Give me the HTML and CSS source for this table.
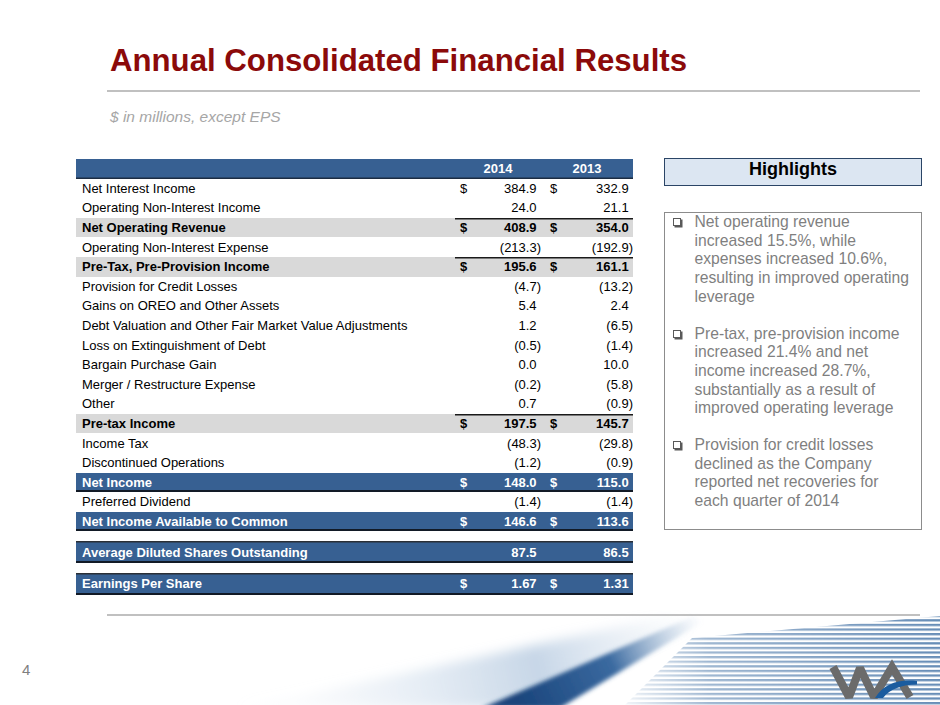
FILE: index.html
```html
<!DOCTYPE html>
<html lang="en">
<head>
<meta charset="utf-8">
<title>Annual Consolidated Financial Results</title>
<link rel="stylesheet" href="styles.css">
</head>
<body>
  <svg class="decor" viewBox="0 0 940 95" width="940" height="95" aria-hidden="true">
    <defs>
      <pattern id="st" width="940" height="4.6" patternUnits="userSpaceOnUse">
        <rect x="0" y="0" width="940" height="2.3" fill="#5f87b3"/>
      </pattern>
      <linearGradient id="fadeX" x1="610" y1="0" x2="940" y2="0" gradientUnits="userSpaceOnUse">
        <stop offset="0" stop-color="#fff" stop-opacity="0"/>
        <stop offset="0.3" stop-color="#fff" stop-opacity="0.6"/>
        <stop offset="1" stop-color="#fff" stop-opacity="0.95"/>
      </linearGradient>
      <mask id="stMask">
        <rect x="0" y="0" width="940" height="95" fill="url(#fadeX)"/>
      </mask>
      <linearGradient id="streak" x1="520" y1="95" x2="700" y2="5" gradientUnits="userSpaceOnUse">
        <stop offset="0" stop-color="#1a457c"/>
        <stop offset="0.5" stop-color="#3b6aa0"/>
        <stop offset="1" stop-color="#a9c1db" stop-opacity="0"/>
      </linearGradient>
      <linearGradient id="haze" x1="300" y1="95" x2="690" y2="5" gradientUnits="userSpaceOnUse">
        <stop offset="0" stop-color="#dbe6f1" stop-opacity="0.15"/>
        <stop offset="0.6" stop-color="#a8c0da" stop-opacity="0.65"/>
        <stop offset="1" stop-color="#c9d8e8" stop-opacity="0"/>
      </linearGradient>
      <filter id="blur6"><feGaussianBlur stdDeviation="6"/></filter>
      <filter id="blur2"><feGaussianBlur stdDeviation="2"/></filter>
    </defs>
    <polygon points="625,95 692,28 940,6 940,95" fill="url(#st)" mask="url(#stMask)"/>
    <polygon points="240,98 500,98 705,12 670,6" fill="url(#haze)" filter="url(#blur6)"/>
    <polygon points="482,98 560,98 706,10 694,6" fill="url(#streak)" filter="url(#blur2)"/>
    <polyline points="833,57 849,87 860,58 874,87 892,57 910,87" fill="none" stroke="#6b6b6b" stroke-width="8" stroke-linejoin="miter" stroke-miterlimit="2"/>
    <path d="M875,88 C884,74 898,69 917,71 L917,74.5 C902,74.5 890,79 883,88 Z" fill="#1b5c9f"/>
  </svg>

  <h1 class="title">Annual Consolidated Financial Results</h1>
  <div class="rule"></div>
  <p class="subtitle">$ in millions, except EPS</p>

  <main class="content">
    <table class="fin">
      <colgroup>
        <col class="c-label"><col class="c-cur"><col class="c-v1"><col class="c-cur2"><col class="c-v2">
      </colgroup>
      <thead>
        <tr class="hdr"><th></th><th colspan="2">2014</th><th colspan="2">2013</th></tr>
      </thead>
      <tbody>
        <tr><td class="lbl">Net Interest Income</td><td class="cur">$</td><td class="num">384.9</td><td class="cur">$</td><td class="num">332.9</td></tr>
        <tr><td class="lbl">Operating Non-Interest Income</td><td class="cur"></td><td class="num">24.0</td><td class="cur"></td><td class="num">21.1</td></tr>
        <tr class="sub"><td class="lbl">Net Operating Revenue</td><td class="cur">$</td><td class="num">408.9</td><td class="cur">$</td><td class="num">354.0</td></tr>
        <tr><td class="lbl">Operating Non-Interest Expense</td><td class="cur"></td><td class="num neg">(213.3)</td><td class="cur"></td><td class="num neg">(192.9)</td></tr>
        <tr class="sub"><td class="lbl">Pre-Tax, Pre-Provision Income</td><td class="cur">$</td><td class="num">195.6</td><td class="cur">$</td><td class="num">161.1</td></tr>
        <tr><td class="lbl">Provision for Credit Losses</td><td class="cur"></td><td class="num neg">(4.7)</td><td class="cur"></td><td class="num neg">(13.2)</td></tr>
        <tr><td class="lbl">Gains on OREO and Other Assets</td><td class="cur"></td><td class="num">5.4</td><td class="cur"></td><td class="num">2.4</td></tr>
        <tr><td class="lbl">Debt Valuation and Other Fair Market Value Adjustments</td><td class="cur"></td><td class="num">1.2</td><td class="cur"></td><td class="num neg">(6.5)</td></tr>
        <tr><td class="lbl">Loss on Extinguishment of Debt</td><td class="cur"></td><td class="num neg">(0.5)</td><td class="cur"></td><td class="num neg">(1.4)</td></tr>
        <tr><td class="lbl">Bargain Purchase Gain</td><td class="cur"></td><td class="num">0.0</td><td class="cur"></td><td class="num">10.0</td></tr>
        <tr><td class="lbl">Merger / Restructure Expense</td><td class="cur"></td><td class="num neg">(0.2)</td><td class="cur"></td><td class="num neg">(5.8)</td></tr>
        <tr><td class="lbl">Other</td><td class="cur"></td><td class="num">0.7</td><td class="cur"></td><td class="num neg">(0.9)</td></tr>
        <tr class="sub"><td class="lbl">Pre-tax Income</td><td class="cur">$</td><td class="num">197.5</td><td class="cur">$</td><td class="num">145.7</td></tr>
        <tr><td class="lbl">Income Tax</td><td class="cur"></td><td class="num neg">(48.3)</td><td class="cur"></td><td class="num neg">(29.8)</td></tr>
        <tr><td class="lbl">Discontinued Operations</td><td class="cur"></td><td class="num neg">(1.2)</td><td class="cur"></td><td class="num neg">(0.9)</td></tr>
        <tr class="tot"><td class="lbl">Net Income</td><td class="cur">$</td><td class="num">148.0</td><td class="cur">$</td><td class="num">115.0</td></tr>
        <tr><td class="lbl">Preferred Dividend</td><td class="cur"></td><td class="num neg">(1.4)</td><td class="cur"></td><td class="num neg">(1.4)</td></tr>
        <tr class="tot"><td class="lbl">Net Income Available to Common</td><td class="cur">$</td><td class="num">146.6</td><td class="cur">$</td><td class="num">113.6</td></tr>
        <tr class="gap"><td colspan="5"></td></tr>
        <tr class="tot boxed"><td class="lbl">Average Diluted Shares Outstanding</td><td class="cur"></td><td class="num">87.5</td><td class="cur"></td><td class="num">86.5</td></tr>
        <tr class="gap gap2"><td colspan="5"></td></tr>
        <tr class="tot boxed"><td class="lbl">Earnings Per Share</td><td class="cur">$</td><td class="num">1.67</td><td class="cur">$</td><td class="num">1.31</td></tr>
      </tbody>
    </table>

    <aside class="side">
      <div class="hl-head">Highlights</div>
      <div class="hl-box">
        <div class="hl-item">
          <span class="bullet"><span class="sq"></span></span>
          <span class="hl-text">Net operating revenue<br>increased 15.5%, while<br>expenses increased 10.6%,<br>resulting in improved operating<br>leverage</span>
        </div>
        <div class="hl-item">
          <span class="bullet"><span class="sq"></span></span>
          <span class="hl-text">Pre-tax, pre-provision income<br>increased 21.4% and net<br>income increased 28.7%,<br>substantially as a result of<br>improved operating leverage</span>
        </div>
        <div class="hl-item">
          <span class="bullet"><span class="sq"></span></span>
          <span class="hl-text">Provision for credit losses<br>declined as the Company<br>reported net recoveries for<br>each quarter of 2014</span>
        </div>
      </div>
    </aside>
  </main>

  <div class="rule rule-bottom"></div>
  <div class="page">4</div>
</body>
</html>
```

FILE: styles.css
```css
html, body {
  margin: 0;
  padding: 0;
}

body {
  width: 940px;
  height: 705px;
  overflow: hidden;
  position: relative;
  background: #ffffff;
  font-family: "Liberation Sans", Arial, sans-serif;
  color: #000;
}

.decor {
  position: absolute;
  left: 0;
  bottom: 0;
  display: block;
}

.title {
  margin: 0;
  padding: 43px 0 0 110px;
  font-size: 31.2px;
  line-height: 36px;
  font-weight: bold;
  color: #8b0a0a;
  position: relative;
}

.rule {
  height: 2px;
  background: #c0c0c0;
  margin: 11px 20px 0 107px;
}

.subtitle {
  margin: 16px 0 0 110px;
  font-size: 15.5px;
  line-height: 18px;
  font-style: italic;
  color: #a6a6a6;
}

.content {
  display: flex;
  align-items: flex-start;
  margin: 33px 0 0 76px;
  position: relative;
}

/* ---------- financial table ---------- */
.fin {
  width: 557px;
  border-collapse: collapse;
  border-spacing: 0;
  table-layout: fixed;
  font-size: 13px;
  line-height: 15px;
}

.c-label { width: 379px; }
.c-cur { width: 22px; }
.c-v1 { width: 64px; }
.c-cur2 { width: 19px; }
.c-v2 { width: 73px; }

.fin th,
.fin td {
  padding: 0;
  height: 19.6px;
  vertical-align: middle;
  white-space: nowrap;
}

.hdr th {
  background: #376092;
  color: #ffffff;
  font-weight: bold;
  text-align: center;
  box-shadow: inset 0 -1.5px 0 #1c2c42;
}

.lbl {
  padding-left: 6px !important;
  text-align: left;
}

.cur {
  text-align: left;
  padding-left: 5px !important;
}

td.cur + td.num + td.cur {
  padding-left: 9px !important;
}

.num {
  text-align: right;
  padding-right: 0.34em !important;
}

.num.neg {
  padding-right: 0 !important;
}

.sub td {
  background: #d9d9d9;
  font-weight: bold;
}

.sub td.cur,
.sub td.num {
  box-shadow: inset 0 1.5px 0 #1a1a1a;
}

.tot td {
  background: #376092;
  color: #ffffff;
  font-weight: bold;
  box-shadow: inset 0 -2px 0 #121a26;
}

.tot.boxed td {
  height: 22px;
  box-shadow: inset 0 -2px 0 #121a26, inset 0 1.5px 0 #2a2f36;
}

.gap td {
  height: 10px;
  background: transparent;
}

.gap2 td {
  height: 9.5px;
}

/* ---------- highlights ---------- */
.side {
  margin-left: 31px;
  margin-top: -1px;
  width: 258px;
}

.hl-head {
  height: 28px;
  box-sizing: border-box;
  border: 1.5px solid #2b4566;
  background: #dce6f2;
  text-align: center;
  font-weight: bold;
  font-size: 18px;
  line-height: 21px;
  color: #000;
}

.hl-box {
  margin-top: 26px;
  height: 318px;
  box-sizing: border-box;
  border: 1.5px solid #8c8c8c;
  padding: 0 6px 0 8px;
  color: #7f7f7f;
  font-size: 15.7px;
  line-height: 18.7px;
}

.hl-item {
  display: flex;
  align-items: flex-start;
}

.hl-item + .hl-item {
  margin-top: 18px;
}

.bullet {
  flex: none;
  width: 21.5px;
  padding-top: 5px;
}

.sq {
  display: block;
  width: 6px;
  height: 6px;
  border: 1px solid #595959;
  box-shadow: 1.5px 1.5px 0 #595959;
}

.hl-text {
  white-space: nowrap;
}

/* ---------- footer ---------- */
.rule-bottom {
  margin-top: 19px;
}

.page {
  margin: 45px 0 0 22px;
  font-size: 15px;
  line-height: 17px;
  color: #7f7f7f;
  position: relative;
}
```
